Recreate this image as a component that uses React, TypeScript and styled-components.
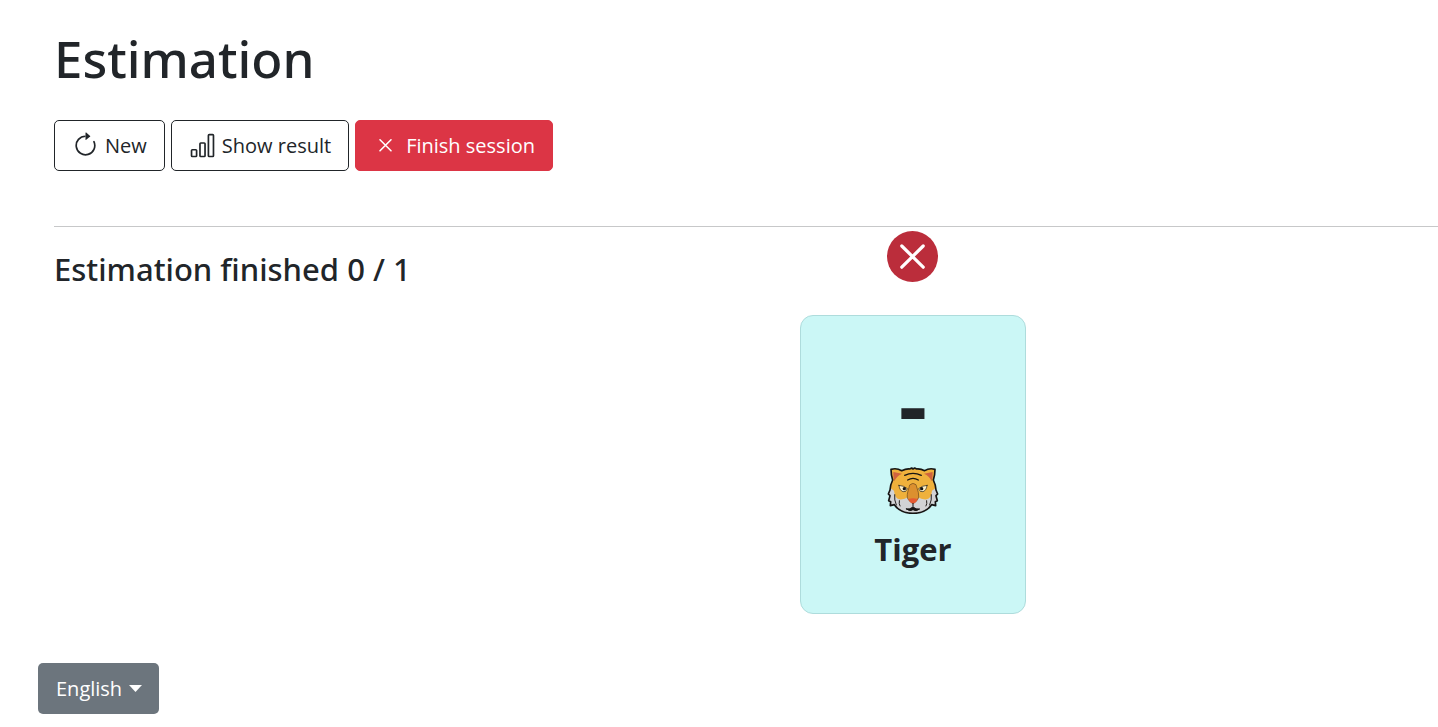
import React from "react";
import styled, { createGlobalStyle, css } from "styled-components";
import { BsArrowClockwise, BsBarChart } from "react-icons/bs";

const GlobalStyle = createGlobalStyle`
  *, *::before, *::after { box-sizing: border-box; }
  body {
    margin: 0;
    background: #fff;
    color: #212529;
    font-family: "Segoe UI", "Open Sans", "Noto Sans", sans-serif;
    font-size: 20px;
    line-height: 34px;
  }
`;

const Page = styled.div`
  display: flex;
  flex-direction: column;
  min-height: 100vh;
`;

const Main = styled.main`
  padding: 24px 0 0 54px;
`;

const headingFont = css`
  font-family: "Segoe UI", "Noto Sans", "Open Sans", sans-serif;
  font-weight: 500;
`;

const Title = styled.h1`
  ${headingFont}
  margin: 0 0 28px;
  font-size: 51px;
  line-height: 68px;
`;

const Toolbar = styled.div`
  display: flex;
  flex-wrap: wrap;
  gap: 6px;
`;

const controlBase = css`
  height: 51px;
  border: 1px solid transparent;
  border-radius: 5px;
  font: inherit;
  cursor: pointer;
`;

const ToolButton = styled.button<{ $danger?: boolean }>`
  ${controlBase}
  display: inline-flex;
  align-items: center;
  gap: 6px;
  padding: 0 17px;
  white-space: nowrap;
  color: ${(p) => (p.$danger ? "#fff" : "#212529")};
  background: ${(p) => (p.$danger ? "#dc3545" : "#fff")};
  border-color: ${(p) => (p.$danger ? "#dc3545" : "#212529")};

  svg {
    flex: none;
    width: 27px;
    height: 27px;
  }
`;

const Divider = styled.hr`
  margin: 55px 0 0;
  border: 0;
  border-top: 1px solid #c7c8c9;
`;

const Board = styled.section`
  display: grid;
  grid-template-columns: 539fr 461fr;
  padding-top: 4px;
`;

const Progress = styled.h2`
  ${headingFont}
  margin: 19px 0 0;
  font-size: 31px;
  line-height: 38px;
`;

const Player = styled.div`
  display: flex;
  flex-direction: column;
  align-items: center;
  gap: 33px;
  width: 226px;
`;

const StatusBadge = styled.svg`
  display: block;
  width: 51px;
  height: 51px;
`;

const Card = styled.article`
  display: flex;
  flex-direction: column;
  align-items: center;
  width: 100%;
  padding: 48px 16px 43px;
  border: 1px solid #aedcdc;
  border-radius: 13px;
  background: #cbf7f6;
`;

const Estimate = styled.div`
  font-size: 88px;
  font-weight: 700;
  line-height: 78px;
`;

const Avatar = styled.svg`
  display: block;
  width: 52px;
  height: 48px;
  margin-top: 24px;
`;

const PlayerName = styled.h3`
  margin: 14px 0 0;
  font-size: 31px;
  font-weight: 700;
  line-height: 42px;
`;

const Footer = styled.footer`
  margin-top: auto;
  padding: 48px 38px 13px;
`;

const LanguagePicker = styled.label`
  position: relative;
  display: inline-block;
  vertical-align: top;
`;

const LanguageSelect = styled.select`
  ${controlBase}
  appearance: none;
  width: 121px;
  padding: 0 32px 0 17px;
  color: #fff;
  background: #6c757d;
`;

const Caret = styled.svg`
  position: absolute;
  top: 22px;
  right: 17px;
  width: 13px;
  height: 7px;
  pointer-events: none;
`;

const CloseIcon = () => (
  <svg viewBox="0 0 27 27" fill="none" stroke="currentColor" strokeWidth="1.6" strokeLinecap="round" aria-hidden="true">
    <path d="M7 7.8l11 11M18 7.8l-11 11" />
  </svg>
);

const NotReady = () => (
  <StatusBadge viewBox="0 0 51 51" role="img" aria-label="Not finished">
    <circle cx="25.5" cy="25.5" r="25.5" fill="#bb2d3b" />
    <path d="M14.8 15l21.4 21.2M36.2 15L14.8 36.2" stroke="#fff" strokeWidth="3.2" strokeLinecap="round" />
  </StatusBadge>
);

const TigerFace = () => (
  <Avatar viewBox="21 18 156 144" role="img" aria-label="Tiger face" strokeLinejoin="round" strokeLinecap="round">
    <path
      d="M33 28Q50 23 65 32Q78 26 89 27L95 24L99 27L104 24L110 27Q122 26 134 32Q148 23 165 28Q165 45 160 60Q167 74 168 90L173 102L168 107L172 122L166 125L167 137L155 134Q137 160 99 160Q61 160 43 134L31 137L32 125L26 122L30 107L25 102L30 90Q31 74 38 60Q33 45 33 28Z"
      fill="#efb13c"
    />
    <path
      d="M31 84L42 92Q44 114 58 118Q75 119 83 112L99 128L115 112Q123 119 140 118Q154 114 156 92L167 84L173 102L168 107L172 122L166 125L167 137L155 134Q137 160 99 160Q61 160 43 134L31 137L32 125L26 122L30 107L25 102Z"
      fill="#d2d3d5"
    />
    <path d="M40 36L66 41Q50 47 43 64Q39 50 40 36ZM158 36L132 41Q148 47 155 64Q159 50 158 36Z" fill="#d0633f" />
    <path
      d="M33 28Q50 23 65 32Q78 26 89 27L95 24L99 27L104 24L110 27Q122 26 134 32Q148 23 165 28Q165 45 160 60Q167 74 168 90L173 102L168 107L172 122L166 125L167 137L155 134Q137 160 99 160Q61 160 43 134L31 137L32 125L26 122L30 107L25 102L30 90Q31 74 38 60Q33 45 33 28Z"
      fill="none"
      stroke="#161514"
      strokeWidth="5"
    />
    <path d="M74 46Q99 34 124 46M83 60Q99 50 115 60" fill="none" stroke="#161514" strokeWidth="4" />
    <path d="M57 76Q72 77 82 86Q78 98 69 95Q58 91 57 76ZM141 76Q126 77 116 86Q120 98 129 95Q140 91 141 76Z" fill="#fff2ca" stroke="#161514" strokeWidth="2" />
    <circle cx="73" cy="86" r="5" fill="#161514" />
    <circle cx="125" cy="86" r="5" fill="#161514" />
    <path d="M90 74Q99 66 108 74L115 97Q119 114 112 120Q104 130 99 130Q94 130 86 120Q79 114 83 97Z" fill="#dc902f" stroke="#6b491d" strokeWidth="2" />
    <path d="M85 117Q99 112 113 117Q109 129 99 131Q89 129 85 117Z" fill="#e45a32" />
    <path d="M99 130V139M79 147Q90 149 99 141Q108 149 119 147Q108 156 99 149Q90 156 79 147Z" fill="#161514" stroke="#161514" strokeWidth="3" />
    <path d="M44 104Q42 120 49 135M154 104Q156 120 149 135M58 122Q56 132 60 138M140 122Q142 132 138 138" fill="none" stroke="#24201d" strokeWidth="3" />
  </Avatar>
);

export default function App() {
  return (
    <>
      <GlobalStyle />
      <Page>
        <Main>
          <Title>Estimation</Title>
          <Toolbar>
            <ToolButton type="button">
              <BsArrowClockwise aria-hidden="true" />
              New
            </ToolButton>
            <ToolButton type="button">
              <BsBarChart aria-hidden="true" />
              Show result
            </ToolButton>
            <ToolButton type="button" $danger>
              <CloseIcon />
              Finish session
            </ToolButton>
          </Toolbar>
          <Divider />
          <Board>
            <Progress>Estimation finished 0 / 1</Progress>
            <Player>
              <NotReady />
              <Card>
                <Estimate>-</Estimate>
                <TigerFace />
                <PlayerName>Tiger</PlayerName>
              </Card>
            </Player>
          </Board>
        </Main>
        <Footer>
          <LanguagePicker>
            <LanguageSelect aria-label="Language" defaultValue="en">
              <option value="en">English</option>
            </LanguageSelect>
            <Caret viewBox="0 0 13 7" aria-hidden="true">
              <path d="M0 0h13L6.5 7z" fill="#fff" />
            </Caret>
          </LanguagePicker>
        </Footer>
      </Page>
    </>
  );
}
